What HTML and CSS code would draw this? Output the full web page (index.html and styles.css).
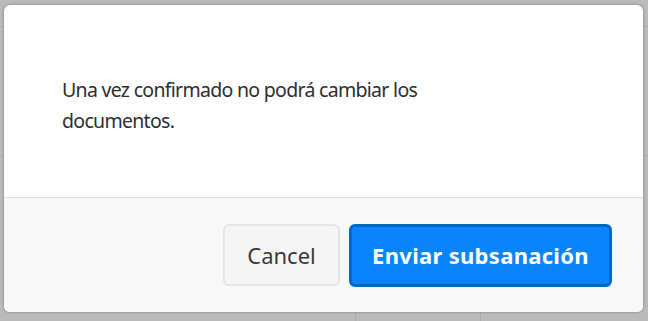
FILE: index.html
```html
<!DOCTYPE html>
<html lang="es">
<head>
<meta charset="utf-8">
<title>Confirmar</title>
<link rel="stylesheet" href="styles.css">
</head>
<body>
<div class="backdrop">
  <div class="modal">
    <div class="modal-body">
      <p class="message">Una vez confirmado no podrá cambiar los documentos.</p>
    </div>
    <div class="modal-footer">
      <button class="btn btn-cancel" type="button">Cancel</button>
      <button class="btn btn-primary" type="button">Enviar subsanación</button>
    </div>
  </div>
</div>
</body>
</html>
```

FILE: styles.css
```css
* { box-sizing: border-box; }
html, body {
  margin: 0;
  padding: 0;
  width: 648px;
  height: 321px;
  overflow: hidden;
}
body {
  font-family: "Noto Sans", "Open Sans", sans-serif;
  background: #bababa;
}
.backdrop {
  width: 648px;
  height: 321px;
  padding: 5px 5px 9px 4px;
  background-color: #bababa;
  background-image:
    linear-gradient(#acacac, #acacac),
    linear-gradient(#acacac, #acacac),
    linear-gradient(#acacac, #acacac),
    linear-gradient(#acacac, #acacac);
  background-repeat: no-repeat;
  background-size: 648px 1px, 648px 1px, 1px 8px, 1px 8px;
  background-position: 0 26px, 0 155px, 355px 313px, 480px 313px;
}
.modal {
  width: 639px;
  height: 307px;
  background: #ffffff;
  border-radius: 6px;
  box-shadow: 0 0 3px rgba(0,0,0,0.35);
  display: flex;
  flex-direction: column;
  overflow: hidden;
}
.modal-body {
  height: 193px;
  padding: 7px 58px 0;
  display: flex;
  align-items: center;
  border-bottom: 1px solid #dedede;
}
.message {
  margin: 0;
  max-width: 420px;
  font-size: 19.5px;
  letter-spacing: -0.7px;
  line-height: 31px;
  color: #2e2e2e;
}
.modal-footer {
  flex: 1;
  background: #f8f8f8;
  display: flex;
  align-items: center;
  justify-content: flex-end;
  gap: 9px;
  padding-right: 31px;
}
.btn {
  font-family: inherit;
  font-size: 22px;
  border-radius: 6px;
  cursor: pointer;
  padding: 0;
}
.btn-cancel {
  width: 117px;
  height: 62px;
  background: #f5f5f5;
  border: 2px solid #e4e4e4;
  color: #3a3a3a;
}
.btn-primary {
  width: 263px;
  height: 63px;
  background: #0a84fc;
  border: 3px solid #0068c4;
  color: #ffffff;
  font-weight: 700;
  letter-spacing: 0.3px;
}
```
